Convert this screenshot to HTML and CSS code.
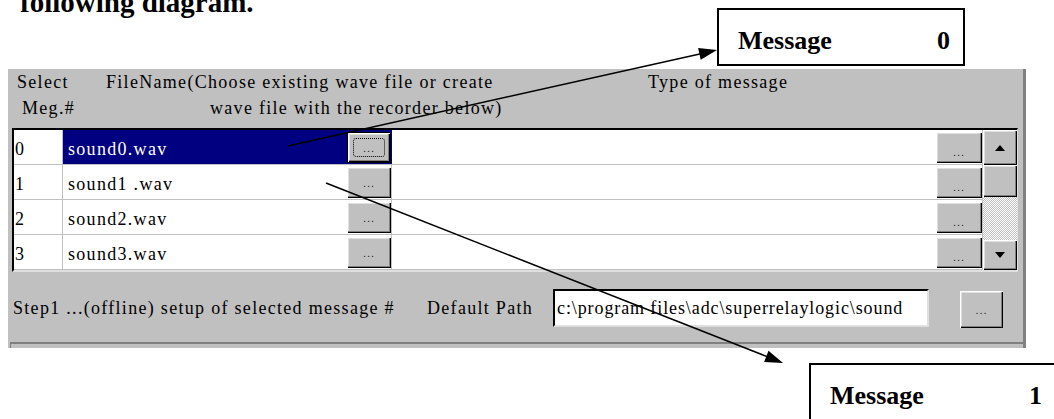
FILE: index.html
```html
<!DOCTYPE html>
<html lang="en">
<head>
  <meta charset="UTF-8">
  <title>Message setup</title>
  <link rel="stylesheet" href="styles.css">
</head>
<body>
<div class="page">
  <h1 class="lead">following diagram.</h1>

  <div class="panel">
    <div class="head">
      <div class="h-sel"><div>Select</div><div class="ind">Meg.#</div></div>
      <div class="h-file"><div>FileName(Choose existing wave file or create</div><div class="ind2">wave file with the recorder below)</div></div>
      <div class="h-type">Type of message</div>
    </div>

    <div class="grid">
      <div class="rows">
        <div class="row sel">
          <div class="c-num">0</div>
          <div class="c-file"><span class="fname">sound0.wav</span><button class="btn focus"><span class="ring">...</span></button></div>
          <div class="c-type"><button class="btn low">...</button></div>
        </div>
        <div class="row">
          <div class="c-num">1</div>
          <div class="c-file"><span class="fname">sound1 .wav</span><button class="btn">...</button></div>
          <div class="c-type"><button class="btn low">...</button></div>
        </div>
        <div class="row">
          <div class="c-num">2</div>
          <div class="c-file"><span class="fname">sound2.wav</span><button class="btn">...</button></div>
          <div class="c-type"><button class="btn low">...</button></div>
        </div>
        <div class="row">
          <div class="c-num">3</div>
          <div class="c-file"><span class="fname">sound3.wav</span><button class="btn">...</button></div>
          <div class="c-type"><button class="btn low">...</button></div>
        </div>
      </div>
      <div class="scroll">
        <div class="btn sb-up"><svg width="10" height="6" viewBox="0 0 10 6"><polygon points="5,0 10,6 0,6" fill="#000"/></svg></div>
        <div class="btn sb-thumb"></div>
        <div class="sb-track"></div>
        <div class="btn sb-down"><svg width="10" height="6" viewBox="0 0 10 6"><polygon points="0,0 10,0 5,6" fill="#000"/></svg></div>
      </div>
    </div>

    <div class="foot">
      <span class="step">Step1 ...(offline) setup of selected message #</span>
      <span class="dlabel">Default Path</span>
      <div class="path">c:\program files\adc\superrelaylogic\sound</div>
      <button class="btn pbtn">...</button>
    </div>
    <div class="next"></div>
  </div>

  <div class="callout c0"><span>Message</span><span>0</span></div>
  <div class="callout c1"><span>Message</span><span>1</span></div>

  <svg class="arrows" width="1054" height="419" viewBox="0 0 1054 419">
    <line x1="288" y1="146" x2="702" y2="53.4" stroke="#000" stroke-width="1.5"/>
    <polygon points="717,50 700.7,59.8 698.1,48.0" fill="#000"/>
    <line x1="326" y1="183" x2="767" y2="356.6" stroke="#000" stroke-width="1.5"/>
    <polygon points="783,363 764.1,362.0 768.5,350.8" fill="#000"/>
  </svg>
</div>
</body>
</html>
```

FILE: styles.css
```css
html, body {
  margin: 0;
  padding: 0;
  overflow: hidden;
  height: 100%;
  background: #fff;
  font-family: "Liberation Serif", serif;
  font-size: 18px;
  letter-spacing: 1.3px;
  color: #000;
}

.page {
  position: relative;
  display: flow-root;
  width: 1054px;
  height: 419px;
  overflow: hidden;
}

.lead {
  font-family: "Liberation Serif", serif;
  font-weight: bold;
  font-size: 29px;
  line-height: 29px;
  letter-spacing: 0;
  margin: -12px 0 0 20px;
}

.panel {
  margin: 52px 0 0 8px;
  width: 1015px;
  height: 279px;
  background: #c0c0c0;
  border-right: 3px solid #808080;
}

/* header labels */
.head {
  display: flex;
  height: 59px;
  line-height: 26px;
}

.h-sel {
  width: 89px;
  padding-left: 9px;
}

.ind {
  padding-left: 5px;
}

.h-file {
  width: 542px;
}

.ind2 {
  padding-left: 104px;
}

/* the grid */
.grid {
  display: flex;
  margin-left: 4px;
  width: 1003px;
  border-top: 2px solid #000;
  border-left: 2px solid #000;
  border-right: 1px solid #dfdfdf;
  border-bottom: 2px solid #dfdfdf;
}

.rows {
  flex: 1;
}

.row {
  display: grid;
  grid-template-columns: 49px 329px 1fr;
  height: 34px;
  border-bottom: 1px solid #c0c0c0;
  background: #fff;
}

.row > div {
  border-right: 1px solid #c0c0c0;
  line-height: 19px;
}

.c-num {
  padding: 10px 0 0 1px;
}

.c-file {
  display: flex;
  justify-content: space-between;
  align-items: flex-start;
  padding-left: 5px;
}

.fname {
  padding-top: 10px;
}

.row.sel .c-file {
  background: #000080;
  color: #fff;
  border-right-color: #000080;
}

.c-type {
  display: flex;
  justify-content: flex-end;
  align-items: flex-start;
}

/* classic 3d buttons */
.btn {
  box-sizing: border-box;
  padding: 0;
  border: none;
  background: #c0c0c0;
  box-shadow: inset 1px 1px #fff, inset -1px -1px #000, inset -2px -2px #808080, inset 2px 2px #dfdfdf;
  font-family: "Liberation Sans", sans-serif;
  font-size: 11px;
  letter-spacing: 1px;
  color: #202020;
  display: flex;
  justify-content: center;
  align-items: center;
}

.c-file .btn {
  width: 44px;
  height: 31px;
  margin-top: 2px;
}

.c-type .btn {
  width: 46px;
  height: 31px;
  margin-top: 2px;
}

.btn.low {
  align-items: flex-end;
  padding-bottom: 5px;
}

.btn.focus {
  border: 1px solid #000;
}

.ring {
  display: flex;
  justify-content: center;
  align-items: center;
  width: 30px;
  height: 17px;
  border: 1px dotted #000;
  border-radius: 3px;
}

/* scrollbar */
.scroll {
  width: 34px;
  display: flex;
  flex-direction: column;
}

.sb-up {
  height: 35px;
}

.sb-thumb {
  height: 32px;
}

.sb-track {
  flex: 1;
  background-color: #fff;
  background-image: repeating-conic-gradient(#c0c0c0 0 25%, #fff 0 50%);
  background-size: 2px 2px;
}

.sb-down {
  height: 30px;
}

/* bottom row */
.foot {
  display: flex;
  align-items: flex-start;
  height: 53px;
  padding: 17px 0 0 5px;
}

.step {
  width: 414px;
  margin-top: 10px;
  line-height: 19px;
}

.dlabel {
  width: 126px;
  margin-top: 10px;
  line-height: 19px;
}

.path {
  box-sizing: border-box;
  width: 376px;
  height: 38px;
  padding: 8px 0 0 2px;
  background: #fff;
  border-top: 2px solid #000;
  border-left: 2px solid #000;
  border-right: 2px solid #dfdfdf;
  border-bottom: 2px solid #dfdfdf;
  line-height: 19px;
  letter-spacing: 0.9px;
  white-space: nowrap;
  overflow: hidden;
}

.pbtn {
  width: 43px;
  height: 37px;
  margin: 2px 0 0 31px;
}

.next {
  margin-left: 2px;
  height: 4px;
  border-top: 2px solid #808080;
  border-left: 1px solid #808080;
}

/* annotations */
.callout {
  position: absolute;
  box-sizing: border-box;
  width: 248px;
  height: 58px;
  display: flex;
  justify-content: space-between;
  padding: 17px 13px 0 19px;
  background: #fff;
  border: 2px solid #000;
  font-family: "Liberation Serif", serif;
  font-weight: bold;
  font-size: 26px;
  line-height: 28px;
  letter-spacing: 0;
}

.c0 {
  left: 717px;
  top: 8px;
}

.c1 {
  left: 809px;
  top: 363px;
}

.arrows {
  position: absolute;
  left: 0;
  top: 0;
  pointer-events: none;
}
```
